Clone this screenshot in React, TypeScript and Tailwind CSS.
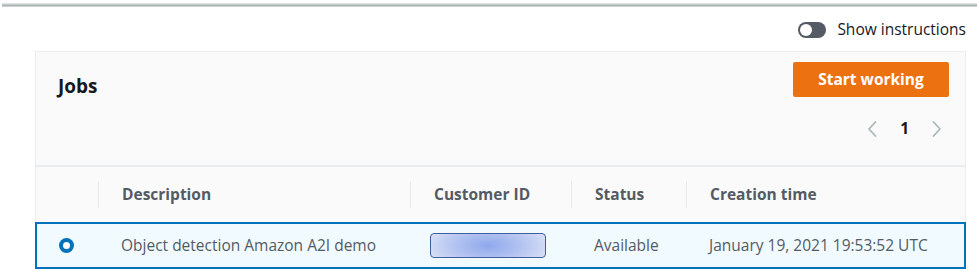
import { useState } from "react";

const font = { fontFamily: '"Open Sans", "Noto Sans", sans-serif' };

const columns = [
  { label: "", w: "w-[62px]" },
  { label: "Description", w: "w-[312px]" },
  { label: "Customer ID", w: "w-[161px]" },
  { label: "Status", w: "w-[115px]" },
  { label: "Creation time", w: "flex-1" }
];

function Chevron({ dir }: { dir: "left" | "right" }) {
  return (
    <svg width="12" height="18" viewBox="0 0 12 18" fill="none">
      <path
        d={dir === "left" ? "M9.5 2 L3 9 L9.5 16" : "M2.5 2 L9 9 L2.5 16"}
        stroke="#aab7b8"
        strokeWidth="1.8"
        strokeLinecap="round"
        strokeLinejoin="round"
      />
    </svg>
  );
}

export default function App() {
  const [showInstructions, setShowInstructions] = useState(false);

  return (
    <div className="h-[277px] w-[977px] overflow-hidden bg-white text-[#16191f]" style={font}>
      <div className="ml-[2px] mt-[3px] h-[4px] bg-[linear-gradient(#eceeee,#a9b0b0_65%,#e2e5e5)]" />

      <div className="mt-[14px] flex h-[17px] items-center justify-end pr-[11px]">
        <button
          type="button"
          onClick={() => setShowInstructions(!showInstructions)}
          className="flex items-center gap-[11px]"
        >
          <span className="flex h-[16px] w-[28px] items-center rounded-full bg-[#545b64] px-[2px]">
            <span className="h-[12px] w-[12px] rounded-full bg-white" />
          </span>
          <span className="text-[15.5px] leading-none text-[#16191f]">Show instructions</span>
        </button>
      </div>

      <div className="ml-[35px] mt-[13px] w-[931px] border border-[#eaeded] bg-[#fafafa]">
        <div className="h-[115px] border-b-2 border-[#eaeded] pl-[22px] pr-[16px] pt-[10px]">
          <div className="flex items-start justify-between">
            <h2 className="pt-[12px] text-[19px] font-bold leading-[24px] text-[#16191f]">Jobs</h2>
            <button
              type="button"
              className="h-[35px] w-[156px] rounded-[2px] bg-[#ec7211] text-[15.5px] font-bold text-white"
            >
              Start working
            </button>
          </div>
          <div className="mt-[22px] flex items-center justify-end gap-[22px] pr-[6px]">
            <Chevron dir="left" />
            <span className="text-[15.5px] font-bold leading-none text-[#16191f]">1</span>
            <Chevron dir="right" />
          </div>
        </div>

        <div className="flex h-[55px] items-center">
          {columns.map((c, i) => (
            <div key={i} className={`${c.w} flex h-[27px] items-center ${i > 0 ? "border-l border-[#e9ebed]" : ""} pl-[23px]`}>
              <span className="text-[15.5px] font-bold text-[#545b64]">{c.label}</span>
            </div>
          ))}
        </div>

        <div className="-mx-px -mb-px flex h-[47px] items-center border-2 border-[#0073bb] bg-[#f1faff] text-[15.5px] text-[#545b64]">
          <div className="flex w-[61px] justify-center pr-[2px]">
            <span className="flex h-[15px] w-[15px] items-center justify-center rounded-full bg-[#0073bb]">
              <span className="h-[7px] w-[7px] rounded-full bg-white" />
            </span>
          </div>
          <div className="w-[312px] pl-[23px]">Object detection Amazon A2I demo</div>
          <div className="w-[161px] pl-[20px]">
            <div className="h-[25px] w-[116px] rounded-[4px] border border-[#3f5f9c] bg-[radial-gradient(ellipse_60%_120%_at_center,#8fa8ec_0%,#b4c4f1_50%,#dfe4f6_100%)]" />
          </div>
          <div className="w-[115px] pl-[23px]">Available</div>
          <div className="flex-1 pl-[23px]">January 19, 2021 19:53:52 UTC</div>
        </div>
      </div>
    </div>
  );
}
